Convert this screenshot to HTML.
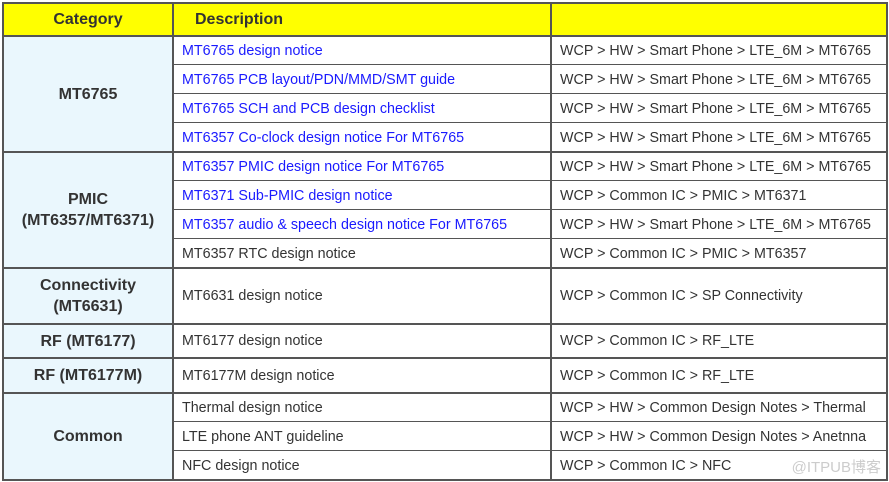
<!DOCTYPE html>
<html><head><meta charset="utf-8"><style>
body{margin:0;width:889px;height:482px;background:#fff;position:relative;overflow:hidden;font-family:"Liberation Sans","Noto Sans CJK SC",sans-serif;}
.c{position:absolute;box-sizing:border-box;display:flex;align-items:center;font-size:14.3px;color:#333;white-space:nowrap;}
.cat{background:#eaf7fd;justify-content:center;text-align:center;font-weight:bold;font-size:16px;color:#333;line-height:21px;}
.d{padding-left:9px;}
.b{color:#1a1aff;}
.h{background:#ffff00;font-weight:bold;font-size:16px;color:#333;}
.hl{position:absolute;height:2px;background:#555;}
.vl{position:absolute;width:2px;background:#555;}
.wm{position:absolute;right:8px;top:456px;font-size:15px;color:#ccc;}
</style></head><body>
<div class="c h" style="left:3px;top:3px;width:170px;height:33px;justify-content:center">Category</div>
<div class="c h" style="left:173px;top:3px;width:378px;height:33px;padding-left:22px">Description</div>
<div class="c h" style="left:551px;top:3px;width:336px;height:33px"></div>

<div class="c cat" style="left:3px;top:36px;width:170px;height:116px">MT6765</div>
<div class="c cat" style="left:3px;top:152px;width:170px;height:116px">PMIC<br>(MT6357/MT6371)</div>
<div class="c cat" style="left:3px;top:268px;width:170px;height:56px">Connectivity<br>(MT6631)</div>
<div class="c cat" style="left:3px;top:324px;width:170px;height:34px">RF (MT6177)</div>
<div class="c cat" style="left:3px;top:358px;width:170px;height:35px">RF (MT6177M)</div>
<div class="c cat" style="left:3px;top:393px;width:170px;height:87px">Common</div>

<div class="c d b" style="left:173px;top:36px;height:29px">MT6765 design notice</div>
<div class="c d b" style="left:173px;top:65px;height:29px">MT6765 PCB layout/PDN/MMD/SMT guide</div>
<div class="c d b" style="left:173px;top:94px;height:29px">MT6765 SCH and PCB design checklist</div>
<div class="c d b" style="left:173px;top:123px;height:29px">MT6357 Co-clock design notice For MT6765</div>
<div class="c d b" style="left:173px;top:152px;height:29px">MT6357 PMIC design notice For MT6765</div>
<div class="c d b" style="left:173px;top:181px;height:29px">MT6371 Sub-PMIC design notice</div>
<div class="c d b" style="left:173px;top:210px;height:29px">MT6357 audio &amp; speech design notice For MT6765</div>
<div class="c d" style="left:173px;top:239px;height:29px">MT6357 RTC design notice</div>
<div class="c d" style="left:173px;top:268px;height:56px">MT6631 design notice</div>
<div class="c d" style="left:173px;top:324px;height:34px">MT6177 design notice</div>
<div class="c d" style="left:173px;top:358px;height:35px">MT6177M design notice</div>
<div class="c d" style="left:173px;top:393px;height:29px">Thermal design notice</div>
<div class="c d" style="left:173px;top:422px;height:29px">LTE phone ANT guideline</div>
<div class="c d" style="left:173px;top:451px;height:29px">NFC design notice</div>

<div class="c d" style="left:551px;top:36px;height:29px">WCP &gt; HW &gt; Smart Phone &gt; LTE_6M &gt; MT6765</div>
<div class="c d" style="left:551px;top:65px;height:29px">WCP &gt; HW &gt; Smart Phone &gt; LTE_6M &gt; MT6765</div>
<div class="c d" style="left:551px;top:94px;height:29px">WCP &gt; HW &gt; Smart Phone &gt; LTE_6M &gt; MT6765</div>
<div class="c d" style="left:551px;top:123px;height:29px">WCP &gt; HW &gt; Smart Phone &gt; LTE_6M &gt; MT6765</div>
<div class="c d" style="left:551px;top:152px;height:29px">WCP &gt; HW &gt; Smart Phone &gt; LTE_6M &gt; MT6765</div>
<div class="c d" style="left:551px;top:181px;height:29px">WCP &gt; Common IC &gt; PMIC &gt; MT6371</div>
<div class="c d" style="left:551px;top:210px;height:29px">WCP &gt; HW &gt; Smart Phone &gt; LTE_6M &gt; MT6765</div>
<div class="c d" style="left:551px;top:239px;height:29px">WCP &gt; Common IC &gt; PMIC &gt; MT6357</div>
<div class="c d" style="left:551px;top:268px;height:56px">WCP &gt; Common IC &gt; SP Connectivity</div>
<div class="c d" style="left:551px;top:324px;height:34px">WCP &gt; Common IC &gt; RF_LTE</div>
<div class="c d" style="left:551px;top:358px;height:35px">WCP &gt; Common IC &gt; RF_LTE</div>
<div class="c d" style="left:551px;top:393px;height:29px">WCP &gt; HW &gt; Common Design Notes &gt; Thermal</div>
<div class="c d" style="left:551px;top:422px;height:29px">WCP &gt; HW &gt; Common Design Notes &gt; Anetnna</div>
<div class="c d" style="left:551px;top:451px;height:29px">WCP &gt; Common IC &gt; NFC</div>

<div class="hl" style="left:2px;width:886px;top:2px"></div>
<div class="hl" style="left:2px;width:886px;top:35px"></div>
<div class="hl" style="left:2px;width:886px;top:151px"></div>
<div class="hl" style="left:2px;width:886px;top:267px"></div>
<div class="hl" style="left:2px;width:886px;top:323px"></div>
<div class="hl" style="left:2px;width:886px;top:357px"></div>
<div class="hl" style="left:2px;width:886px;top:392px"></div>
<div class="hl" style="left:2px;width:886px;top:479px"></div>
<div class="hl" style="left:173px;width:715px;top:64px;height:1px"></div>
<div class="hl" style="left:173px;width:715px;top:93px;height:1px"></div>
<div class="hl" style="left:173px;width:715px;top:122px;height:1px"></div>
<div class="hl" style="left:173px;width:715px;top:180px;height:1px"></div>
<div class="hl" style="left:173px;width:715px;top:209px;height:1px"></div>
<div class="hl" style="left:173px;width:715px;top:238px;height:1px"></div>
<div class="hl" style="left:173px;width:715px;top:421px;height:1px"></div>
<div class="hl" style="left:173px;width:715px;top:450px;height:1px"></div>
<div class="vl" style="left:2px;top:2px;height:479px"></div>
<div class="vl" style="left:172px;top:2px;height:479px"></div>
<div class="vl" style="left:550px;top:2px;height:479px"></div>
<div class="vl" style="left:886px;top:2px;height:479px"></div>
<div class="wm">@ITPUB博客</div>
</body></html>
